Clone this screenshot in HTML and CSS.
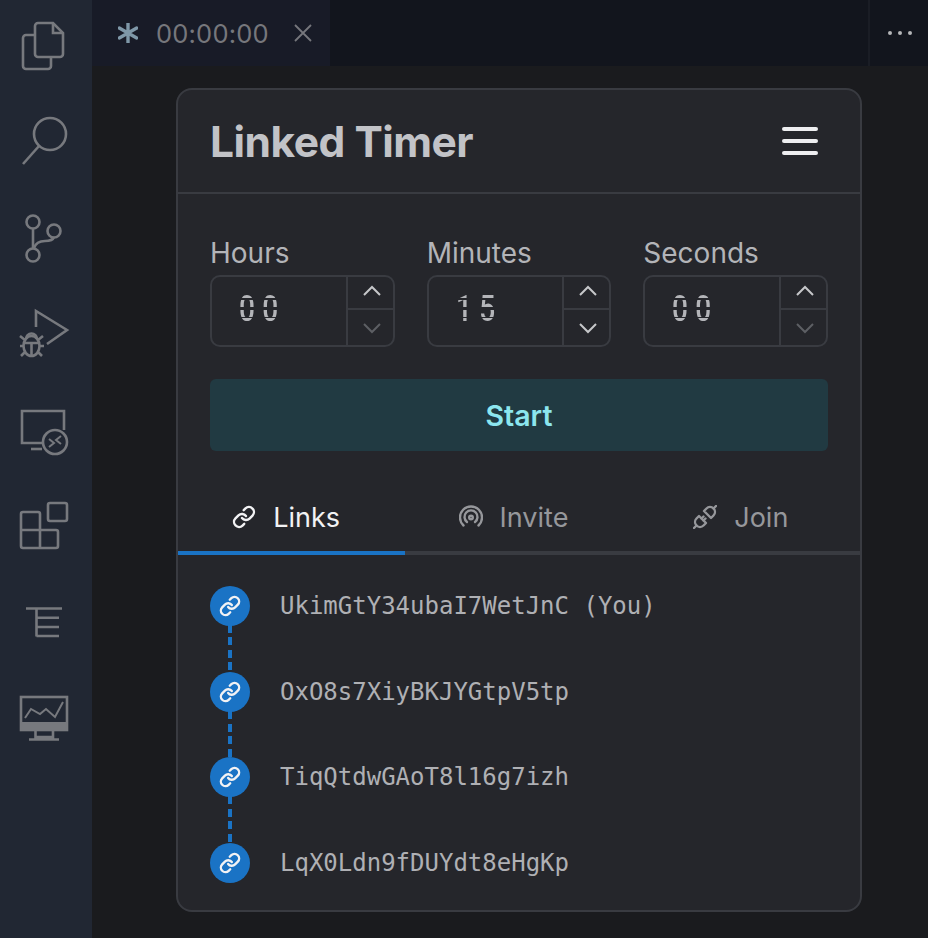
FILE: index.html
```html
<!DOCTYPE html>
<html lang="en">
<head>
<meta charset="utf-8">
<title>Linked Timer</title>
<link rel="stylesheet" href="styles.css">
</head>
<body>
<div class="app">
  <nav class="activity">
    <svg class="act" viewBox="0 0 92 96"><path d="M38 23H53L63 33V54a3 3 0 0 1-3 3H38a3 3 0 0 1-3-3V26a3 3 0 0 1 3-3Z"/><path d="M53 23V33H63"/><path d="M35 35H26a3 3 0 0 0-3 3V66a3 3 0 0 0 3 3H48a3 3 0 0 0 3-3V57"/></svg>
    <svg class="act" viewBox="0 96 92 96"><circle cx="50" cy="134" r="16"/><path d="M39 146L23 164"/></svg>
    <svg class="act" viewBox="0 192 92 96"><circle cx="33" cy="222" r="6.500"/><circle cx="54" cy="231" r="6.500"/><circle cx="33" cy="255" r="6.500"/><path d="M33 229V248"/><path d="M34 248c2-6 6-7 11-7 5 0 8-1 9-4"/></svg>
    <svg class="act" viewBox="0 288 92 96"><path d="M36 327V311L67 330L47 344"/><path d="M26 339a5.500 5.500 0 0 1 11 0"/><ellipse cx="31.500" cy="346" rx="8" ry="10"/><path d="M31.500 343V356M23 343H40M20 336L25 340M43 336L38 340M20 346H24M39 346H44M21 356L25 352M42 356L38 352"/></svg>
    <svg class="act" viewBox="0 384 92 96"><path d="M42 443H22V411H64V430"/><path d="M31 449H42"/><circle cx="55" cy="442" r="12"/><path d="M49 439L54 443L49 447M61 436L56 440L61 444" class="thin"/></svg>
    <svg class="act" viewBox="0 480 92 96"><rect x="48" y="503" width="19" height="18" rx="2"/><path d="M21 530V514a2 2 0 0 1 2-2H38a2 2 0 0 1 2 2V530H56a2 2 0 0 1 2 2V546a2 2 0 0 1-2 2H23a2 2 0 0 1-2-2V530H40V548"/></svg>
    <svg class="act" viewBox="0 576 92 96"><path d="M26 608.500H62M36.500 608.500V636.500M36.500 617.800H59M36.500 627H59M36.500 636H59"/></svg>
    <svg class="act" viewBox="0 672 92 96"><rect x="21" y="697" width="46" height="33"/><rect class="fill" x="20" y="722" width="48" height="9"/><path d="M35.500 731V737H53V731M29 739.500H59"/><path d="M25 718L31 709L40 714L46 709L55 717L63 702" class="thin"/></svg>
  </nav>
  <div class="workbench">
    <header class="tabbar">
      <div class="tab">
        <svg class="star" viewBox="0 0 20 20"><path d="M10 0V20M1.300 5L18.700 15M1.300 15L18.700 5"/></svg>
        <span class="tab-time">00:00:00</span>
        <svg class="close" viewBox="0 0 18 18"><path d="M1 1L17 17M17 1L1 17"/></svg>
      </div>
      <div class="tab-rest"></div>
      <div class="tab-actions"><i></i><i></i><i></i></div>
    </header>
    <main class="editor">
      <section class="card">
        <div class="card-head">
          <h1>Linked Timer</h1>
          <div class="burger"><i></i><i></i><i></i></div>
        </div>
        <div class="controls">
          <div class="fields">
            <div class="field">
              <label>Hours</label>
              <div class="stepper">
                <div class="value"><span class="seg">00</span></div>
                <div class="spin">
                  <button class="up"><svg viewBox="0 0 20 12"><path d="M2 10L10 2L18 10"/></svg></button>
                  <button class="down off"><svg viewBox="0 0 20 12"><path d="M2 2L10 10L18 2"/></svg></button>
                </div>
              </div>
            </div>
            <div class="field">
              <label>Minutes</label>
              <div class="stepper">
                <div class="value"><span class="seg">15</span></div>
                <div class="spin">
                  <button class="up"><svg viewBox="0 0 20 12"><path d="M2 10L10 2L18 10"/></svg></button>
                  <button class="down"><svg viewBox="0 0 20 12"><path d="M2 2L10 10L18 2"/></svg></button>
                </div>
              </div>
            </div>
            <div class="field">
              <label>Seconds</label>
              <div class="stepper">
                <div class="value"><span class="seg">00</span></div>
                <div class="spin">
                  <button class="up"><svg viewBox="0 0 20 12"><path d="M2 10L10 2L18 10"/></svg></button>
                  <button class="down off"><svg viewBox="0 0 20 12"><path d="M2 2L10 10L18 2"/></svg></button>
                </div>
              </div>
            </div>
          </div>
          <button class="start">Start</button>
        </div>
        <div class="tabs">
          <div class="t active">
            <svg class="t-ico" viewBox="0 0 24 24"><path d="M10 13a5 5 0 0 0 7.540.540l3-3a5 5 0 0 0-7.070-7.070l-1.720 1.710"/><path d="M14 11a5 5 0 0 0-7.540-.540l-3 3a5 5 0 0 0 7.070 7.070l1.710-1.710"/></svg>
            <span>Links</span>
          </div>
          <div class="t">
            <svg class="t-ico" viewBox="0 0 24 24"><path d="M4.500 20.500a11 11 0 1 1 15 0"/><path d="M8 17a6.500 6.500 0 1 1 8 0"/><circle cx="12" cy="12.500" r="1.800"/></svg>
            <span>Invite</span>
          </div>
          <div class="t">
            <svg class="t-ico" viewBox="0 0 24 24"><path d="M6 11L13 18L10.500 20.500a4.900 4.900 0 0 1-7-7Z"/><path d="M11 6L18 13L20.500 10.500a4.900 4.900 0 0 0-7-7Z"/><path d="M1 23L3.500 20.500M23 1L20.500 3.500M8.500 13.500L10.500 11.500M10.500 15.500L12.500 13.500"/></svg>
            <span>Join</span>
          </div>
        </div>
        <ul class="links">
          <li><span class="node"><svg viewBox="0 0 24 24"><path d="M10 13a5 5 0 0 0 7.540.540l3-3a5 5 0 0 0-7.070-7.070l-1.720 1.710"/><path d="M14 11a5 5 0 0 0-7.540-.540l-3 3a5 5 0 0 0 7.070 7.070l1.710-1.710"/></svg></span><span class="id">UkimGtY34ubaI7WetJnC (You)</span></li>
          <li><span class="node"><svg viewBox="0 0 24 24"><path d="M10 13a5 5 0 0 0 7.540.540l3-3a5 5 0 0 0-7.070-7.070l-1.720 1.710"/><path d="M14 11a5 5 0 0 0-7.540-.540l-3 3a5 5 0 0 0 7.070 7.070l1.710-1.710"/></svg></span><span class="id">OxO8s7XiyBKJYGtpV5tp</span></li>
          <li><span class="node"><svg viewBox="0 0 24 24"><path d="M10 13a5 5 0 0 0 7.540.540l3-3a5 5 0 0 0-7.070-7.070l-1.720 1.710"/><path d="M14 11a5 5 0 0 0-7.540-.540l-3 3a5 5 0 0 0 7.070 7.070l1.710-1.710"/></svg></span><span class="id">TiqQtdwGAoT8l16g7izh</span></li>
          <li><span class="node"><svg viewBox="0 0 24 24"><path d="M10 13a5 5 0 0 0 7.540.540l3-3a5 5 0 0 0-7.070-7.070l-1.720 1.710"/><path d="M14 11a5 5 0 0 0-7.540-.540l-3 3a5 5 0 0 0 7.070 7.070l1.710-1.710"/></svg></span><span class="id">LqX0Ldn9fDUYdt8eHgKp</span></li>
        </ul>
      </section>
    </main>
  </div>
</div>
</body>
</html>
```
FILE: styles.css
```css
* { box-sizing: border-box; }
html, body { margin: 0; height: 100%; background: #1a1b1e; overflow: hidden; }
body { font-family: Inter, "Liberation Sans", sans-serif; }

.app { display: flex; width: 928px; height: 938px; }

.activity { width: 92px; flex: none; background: #212733; display: flex; flex-direction: column; }
.act { width: 92px; height: 96px; flex: none; fill: none; stroke: #77797e; stroke-width: 2.600; display: block; }
.act .thin { stroke-width: 2; }
.act .fill { fill: #77797e; stroke: none; }

.workbench { flex: 1; display: flex; flex-direction: column; min-width: 0; }

.tabbar { height: 66px; flex: none; display: flex; background: #12151d; }
.tab { width: 238px; background: #181b27; display: flex; align-items: center; padding-left: 26px; }
.star { width: 20px; height: 20px; fill: none; stroke: #7f98a8; stroke-width: 3.400; stroke-linecap: round; margin-right: 18px; margin-top: -1px; }
.tab-time { font-size: 25.500px; color: #76777c; letter-spacing: .2px; }
.close { width: 18px; height: 18px; fill: none; stroke: #76777c; stroke-width: 1.800; margin-left: 25px; }
.tab-rest { flex: 1; border-right: 2px solid #1a1d25; }
.tab-actions { width: 58px; padding-left: 2px; display: flex; align-items: center; justify-content: center; gap: 6px; }
.tab-actions i { width: 4px; height: 4px; border-radius: 50%; background: #b4b5b8; }

.editor { flex: 1; padding: 22px 0 0 84px; }

.card { width: 686px; height: 824px; background: #25262b; border: 2px solid #393b41; border-radius: 16px; }

.card-head { height: 104px; display: flex; align-items: center; justify-content: space-between; padding: 0 42px 0 32px; border-bottom: 2px solid #393b41; }
.card-head h1 { margin: 0; font-size: 42.500px; font-weight: 700; color: #c2c3c7; letter-spacing: -.5px; }
.burger { display: flex; flex-direction: column; gap: 8px; width: 36px; margin-top: -1px; }
.burger i { display: block; height: 4px; border-radius: 2px; background: #eeeef0; }

.controls { padding: 39px 32px 0 32px; }
.fields { display: grid; grid-template-columns: repeat(3, 1fr); gap: 32px; }
.field label { display: block; font-size: 28px; line-height: 40px; color: #b3b4b8; }
.stepper { display: flex; height: 72px; margin-top: 2px; border: 2px solid #393b41; border-radius: 10px; }
.value { flex: 1; padding-left: 27px; display: flex; align-items: center; }
.seg {
  font-family: Roboto, sans-serif; font-weight: 500; font-size: 36px; line-height: 32px; height: 32px; letter-spacing: 9.300px;
  color: #b4b5b9; display: block; transform: translateY(-1.800px) scaleX(.78); transform-origin: left center;
  -webkit-mask-image: linear-gradient(to bottom, #000 0 5px, transparent 5px 6.500px, #000 6.500px 13.500px, transparent 13.500px 16.500px, #000 16.500px 24px, transparent 24px 25px, #000 25px);
  mask-image: linear-gradient(to bottom, #000 0 5px, transparent 5px 6.500px, #000 6.500px 13.500px, transparent 13.500px 16.500px, #000 16.500px 24px, transparent 24px 25px, #000 25px);
}
.spin { width: 47px; flex: none; border-left: 2px solid #393b41; display: flex; flex-direction: column; }
.spin button { background: none; border: 0; padding: 0 0 0 3px; display: flex; align-items: center; justify-content: center; }
.spin .up { height: 33px; flex: none; padding-bottom: 3px; border-bottom: 2px solid #393b41; }
.spin .down { flex: 1; }
.spin svg { width: 20px; height: 12px; fill: none; stroke: #c6c7ca; stroke-width: 2; }
.spin .off svg { stroke: #5d5f64; }

.start { display: block; width: 100%; height: 72px; margin-top: 32px; border: 0; border-radius: 6px; background: #213a42; color: #8ce6ef; font: 600 28.500px Inter, sans-serif; }

.tabs { display: flex; margin-top: 39px; height: 65px; border-bottom: 4px solid #393b41; }
.t { flex: 1; display: flex; align-items: center; justify-content: center; gap: 17px; font-size: 27px; color: #96979b; margin-bottom: -4px; border-bottom: 4px solid transparent; padding: 0 11px 7px 0; }
.t.active { color: #f2f2f4; border-bottom-color: #1a73c5; }
.t-ico { width: 24px; height: 24px; fill: none; stroke: currentColor; stroke-width: 2.400; stroke-linecap: round; stroke-linejoin: round; }

.links { list-style: none; margin: 0; padding: 8px 0 0 32px; }
.links li { position: relative; display: flex; align-items: center; gap: 30px; height: 85.700px; }
.links li:not(:last-child)::after { content: ""; position: absolute; left: 18px; top: 62px; width: 4px; height: 46px; background: repeating-linear-gradient(to bottom, #1a73c5 0 8px, transparent 8px 12.500px); }
.node { width: 40px; height: 40px; flex: none; border-radius: 50%; background: #1a73c5; display: flex; align-items: center; justify-content: center; }
.node svg { width: 22px; height: 22px; fill: none; stroke: #f2f2f4; stroke-width: 2.600; stroke-linecap: round; stroke-linejoin: round; }
.id { font-family: "DejaVu Sans Mono", "Liberation Mono", monospace; font-size: 24px; color: #afb0b4; }
```
